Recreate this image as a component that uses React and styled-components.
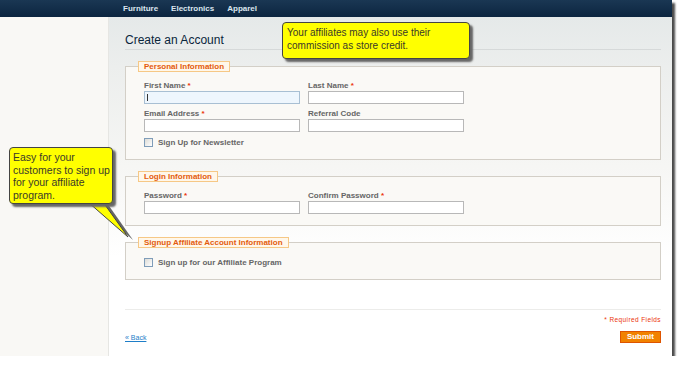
import styled, { createGlobalStyle } from "styled-components";

const GlobalStyle = createGlobalStyle`
  body {
    margin: 0;
    background: #fff;
    font-family: "Liberation Sans", Arial, sans-serif;
  }
`;

const Frame = styled.div`
  position: relative;
  width: 672px;
  height: 356px;
  display: flex;
  flex-direction: column;
  box-shadow: 3px 3px 2px #4a4a4a;
`;

const Nav = styled.div`
  height: 17px;
  flex-shrink: 0;
  display: flex;
  align-items: center;
  gap: 13px;
  padding-left: 123px;
  background: linear-gradient(#1a3753, #0c2540);
  a {
    color: #dce6ef;
    font-size: 8px;
    font-weight: bold;
    text-decoration: none;
  }
`;

const Body = styled.div`
  flex: 1;
  display: flex;
`;

const Sidebar = styled.div`
  width: 108px;
  flex-shrink: 0;
  background: #f9f8f5;
  border-right: 1px solid #e6e6e3;
`;

const Main = styled.div`
  flex: 1;
  padding: 0 11px 0 16px;
  background: linear-gradient(#e5e9e9 0, #eceeed 50px, #f6f6f4 150px, #fff 240px);
`;

const Title = styled.h1`
  margin: 0;
  padding: 16px 0 2px;
  font-size: 12px;
  line-height: 14px;
  font-weight: normal;
  color: #0a263c;
  border-bottom: 1px solid #d6d9d9;
`;

const Box = styled.fieldset`
  margin: ${(p) => p.$top}px 0 0;
  padding: ${(p) => p.$pad};
  background: #faf9f6;
  border: 1px solid #d3cfc7;
  min-width: 0;
`;

const Legend = styled.legend`
  margin-left: -6px;
  padding: 0 5px;
  height: 9px;
  line-height: 9px;
  border: 1px solid #f6c886;
  background: #fff7ea;
  color: #e35b0d;
  font-size: 8px;
  font-weight: bold;
`;

const Grid = styled.div`
  display: grid;
  grid-template-columns: 156px 156px;
  column-gap: 8px;
  row-gap: 5px;
`;

const Field = styled.div`
  position: relative;
  display: flex;
  flex-direction: column;
`;

const Label = styled.label`
  height: 10px;
  line-height: 10px;
  font-size: 8px;
  font-weight: bold;
  color: #666;
  span {
    color: #eb340a;
  }
`;

const Input = styled.input`
  box-sizing: border-box;
  width: 156px;
  height: 13px;
  margin: 0;
  padding: 0 2px;
  border: 1px solid ${(p) => (p.$focus ? "#a8bfd3" : "#b8b8b8")};
  background: ${(p) => (p.$focus ? "#eef6fd" : "#fff")};
  outline: none;
`;

const Caret = styled.span`
  position: absolute;
  left: 3px;
  bottom: 3px;
  width: 1px;
  height: 7px;
  background: #333;
`;

const Check = styled.label`
  display: flex;
  align-items: center;
  gap: 5px;
  margin-top: ${(p) => p.$top || 0}px;
  font-size: 8px;
  font-weight: bold;
  color: #666;
  input {
    appearance: none;
    box-sizing: border-box;
    width: 9px;
    height: 9px;
    margin: 0;
    border: 1px solid #7f9db9;
    background: linear-gradient(135deg, #dcdcd7, #fff);
  }
`;

const Rule = styled.div`
  margin-top: 29px;
  border-top: 1px solid #ececea;
`;

const Required = styled.div`
  margin-top: 6px;
  text-align: right;
  font-size: 6.5px;
  letter-spacing: 0.4px;
  color: #eb340a;
`;

const Actions = styled.div`
  display: flex;
  justify-content: space-between;
  align-items: center;
  margin-top: 8px;
`;

const Back = styled.a`
  font-size: 7px;
  color: #1e7ec8;
  text-decoration: underline;
`;

const Submit = styled.button`
  height: 12px;
  padding: 0 6px;
  border: 1px solid #de5400;
  background: #f18200;
  color: #fff;
  font-family: inherit;
  font-size: 8px;
  font-weight: bold;
  line-height: 10px;
`;

const Note = styled.div`
  position: absolute;
  left: ${(p) => p.$x}px;
  top: ${(p) => p.$y}px;
  width: ${(p) => p.$w}px;
  height: ${(p) => p.$h}px;
  box-sizing: border-box;
  padding: ${(p) => p.$pad};
  background: #ffff00;
  border: 1px solid #444;
  border-radius: 4px;
  box-shadow: 3px 3px 2px #666;
  color: #3a3a2a;
  font-size: ${(p) => p.$size}px;
  line-height: ${(p) => p.$lh}px;
  white-space: nowrap;
`;

const Tail = styled.svg`
  position: absolute;
  left: 84px;
  top: 199px;
`;

export default function App() {
  return (
    <>
      <GlobalStyle />
      <Frame>
        <Nav>
          <a href="#">Furniture</a>
          <a href="#">Electronics</a>
          <a href="#">Apparel</a>
        </Nav>
        <Body>
          <Sidebar />
          <Main>
            <Title>Create an Account</Title>

            <Box $top={11} $pad="9px 18px 12px">
              <Legend>Personal Information</Legend>
              <Grid>
                <Field>
                  <Label>
                    First Name <span>*</span>
                  </Label>
                  <Input $focus />
                  <Caret />
                </Field>
                <Field>
                  <Label>
                    Last Name <span>*</span>
                  </Label>
                  <Input />
                </Field>
                <Field>
                  <Label>
                    Email Address <span>*</span>
                  </Label>
                  <Input />
                </Field>
                <Field>
                  <Label>Referral Code</Label>
                  <Input />
                </Field>
              </Grid>
              <Check $top={6}>
                <input type="checkbox" />
                Sign Up for Newsletter
              </Check>
            </Box>

            <Box $top={11} $pad="9px 18px 11px">
              <Legend>Login Information</Legend>
              <Grid>
                <Field>
                  <Label>
                    Password <span>*</span>
                  </Label>
                  <Input type="password" />
                </Field>
                <Field>
                  <Label>
                    Confirm Password <span>*</span>
                  </Label>
                  <Input type="password" />
                </Field>
              </Grid>
            </Box>

            <Box $top={11} $pad="10px 18px 12px">
              <Legend>Signup Affiliate Account Information</Legend>
              <Check>
                <input type="checkbox" />
                Sign up for our Affiliate Program
              </Check>
            </Box>

            <Rule />
            <Required>* Required Fields</Required>
            <Actions>
              <Back href="#">« Back</Back>
              <Submit>Submit</Submit>
            </Actions>
          </Main>
        </Body>

        <Note $x={282} $y={22} $w={188} $h={37} $pad="4px 4px" $size={10} $lh={12.5}>
          Your affiliates may also use their
          <br />
          commission as store credit.
        </Note>

        <Tail width="50" height="42" viewBox="0 0 50 42">
          <polygon points="6,3 21,3 47,40" fill="#666" transform="translate(2,1)" />
          <polygon points="4,3 19,3 44,38" fill="#ffff00" stroke="#444" strokeWidth="1" />
          <rect x="5" y="0" width="13" height="3.5" fill="#ffff00" />
        </Tail>
        <Note $x={9} $y={147} $w={104} $h={57} $pad="3px 3px" $size={10.5} $lh={12.5}>
          Easy for your
          <br />
          customers to sign up
          <br />
          for your affiliate
          <br />
          program.
        </Note>
      </Frame>
    </>
  );
}
